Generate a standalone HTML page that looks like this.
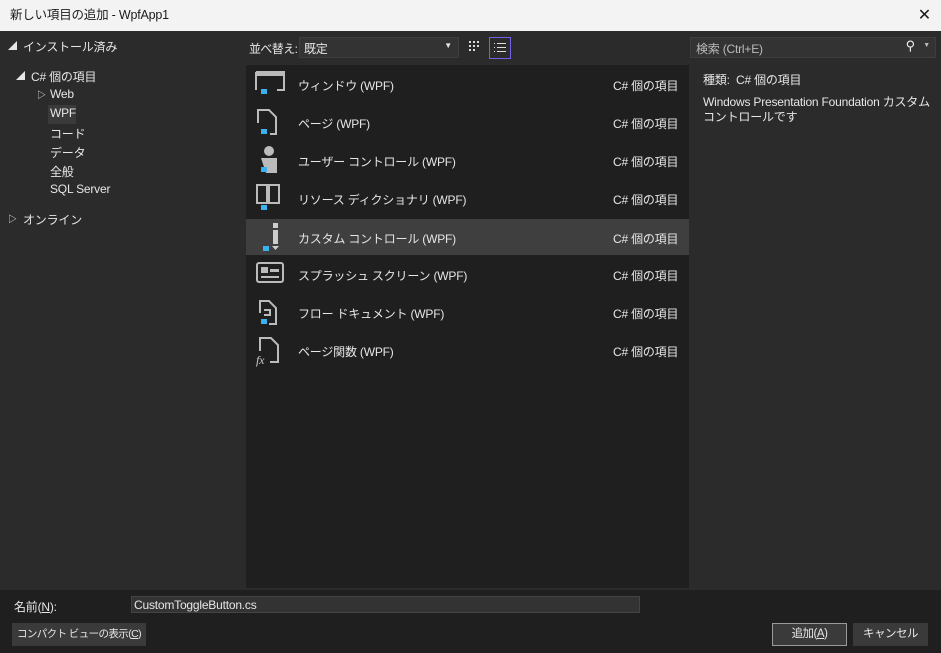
<!DOCTYPE html>
<html><head><meta charset="utf-8"><style>
*{box-sizing:border-box;margin:0;padding:0}
html,body{width:941px;height:653px;overflow:hidden}
body{background:#2b2b2b;font-family:"Liberation Sans","Noto Sans CJK JP",sans-serif;font-size:12px;color:#e6e6e6;position:relative;letter-spacing:-0.2px}
.abs{position:absolute;white-space:nowrap}
.title{left:0;top:0;width:941px;height:31px;background:#f3f3f3;color:#1a1a1a;font-size:12.5px;line-height:31px;padding-left:10px}
.tree div{position:absolute;white-space:nowrap}
.list{left:246px;top:65px;width:443px;height:523px;background:#1f1f1f}
.row{position:absolute;left:0;width:443px;height:36px}
.row .t{position:absolute;left:52px;top:11px;white-space:nowrap}
.row .c{position:absolute;left:367px;top:11px;white-space:nowrap}
.row svg{position:absolute;left:8px;top:3px}
.sel{background:#3f3f3f}
.bottom{left:0;top:590px;width:941px;height:63px;background:#1f1f1f}
.btn{position:absolute;background:#3a3a3a;text-align:center;line-height:23px;height:23px;white-space:nowrap;font-size:11.5px;letter-spacing:-0.5px}
</style></head><body>
<div class="abs title">新しい項目の追加 - WpfApp1<span style="position:absolute;right:10px;top:0;font-size:16px">✕</span></div>

<div class="tree">
<div style="left:8px;top:39px;font-size:9px">◢</div><div style="left:23px;top:38px">インストール済み</div>
<div style="left:16px;top:69px;font-size:9px">◢</div><div style="left:31px;top:68px">C# 個の項目</div>
<div style="left:37px;top:88px;font-size:9px">▷</div><div style="left:50px;top:87px">Web</div>
<div style="left:48px;top:105px;width:28px;height:19px;background:#3a3a3a"></div><div style="left:50px;top:106px">WPF</div>
<div style="left:50px;top:125px">コード</div>
<div style="left:50px;top:144px">データ</div>
<div style="left:50px;top:163px">全般</div>
<div style="left:50px;top:182px">SQL Server</div>
<div style="left:8px;top:212px;font-size:9px">▷</div><div style="left:23px;top:211px">オンライン</div>
</div>

<div class="abs" style="left:249px;top:40px;letter-spacing:-0.6px">並べ替え:</div>
<div class="abs" style="left:299px;top:37px;width:160px;height:21px;background:#333;border:1px solid #3d3d3d;padding:2px 4px">既定<span style="position:absolute;right:6px;top:3px;font-size:8px">▼</span></div>
<svg class="abs" style="left:468px;top:40px" width="14" height="14"><g fill="#ddd"><rect x="1" y="1" width="2" height="2"/><rect x="5" y="1" width="2" height="2"/><rect x="9" y="1" width="2" height="2"/><rect x="1" y="5" width="2" height="2"/><rect x="5" y="5" width="2" height="2"/><rect x="9" y="5" width="2" height="2"/><rect x="1" y="9" width="2" height="2"/><rect x="5" y="9" width="2" height="2"/></g></svg>
<div class="abs" style="left:489px;top:37px;width:22px;height:22px;border:1px solid #7160e8"></div>
<svg class="abs" style="left:493px;top:42px" width="14" height="12"><g fill="#ddd"><rect x="1" y="1" width="1" height="1"/><rect x="4" y="1" width="9" height="1"/><rect x="1" y="5" width="1" height="1"/><rect x="4" y="5" width="9" height="1"/><rect x="1" y="9" width="1" height="1"/><rect x="4" y="9" width="9" height="1"/></g></svg>

<div class="abs" style="left:690px;top:37px;width:246px;height:21px;background:#333;border:1px solid #3d3d3d;padding:2px 5px;color:#bbb">検索 (Ctrl+E)<span style="position:absolute;right:20px;top:0;color:#eee;font-size:13px">⚲</span><span style="position:absolute;right:5px;top:4px;font-size:7px">▼</span></div>

<div class="abs list">
<div class="row" style="top:1px"><svg width="34" height="32"><path d="M2 3h28v18h-7M2 3v18" stroke="#bbb" stroke-width="2" fill="none"/><rect x="2" y="3" width="28" height="4" fill="#bbb"/><rect x="7" y="20" width="6" height="5" fill="#3cb0f0"/></svg><span class="t">ウィンドウ (WPF)</span><span class="c">C# 個の項目</span></div>
<div class="row" style="top:39px"><svg width="34" height="32"><path d="M4 16V3h11l7 7v17h-6" stroke="#bbb" stroke-width="2" fill="none"/><rect x="7" y="22" width="6" height="5" fill="#3cb0f0"/></svg><span class="t">ページ (WPF)</span><span class="c">C# 個の項目</span></div>
<div class="row" style="top:77px"><svg width="34" height="32"><circle cx="15" cy="6" r="5" fill="#bbb"/><path d="M7 13h16v15H12z" fill="#bbb"/><rect x="7" y="22" width="6" height="5" fill="#3cb0f0"/></svg><span class="t">ユーザー コントロール (WPF)</span><span class="c">C# 個の項目</span></div>
<div class="row" style="top:115px"><svg width="34" height="32"><path d="M3 2h10v18H3zM15 2h10v18H15z" stroke="#bbb" stroke-width="2" fill="none"/><rect x="7" y="22" width="6" height="5" fill="#3cb0f0"/></svg><span class="t">リソース ディクショナリ (WPF)</span><span class="c">C# 個の項目</span></div>
<div class="row sel" style="top:154px;height:36px"><svg width="34" height="32"><rect x="19" y="1" width="5" height="5" fill="#ccc"/><rect x="19" y="8" width="5" height="14" fill="#ccc"/><path d="M18 24h7l-3.5 4z" fill="#ccc"/><rect x="9" y="24" width="6" height="5" fill="#3cb0f0"/></svg><span class="t">カスタム コントロール (WPF)</span><span class="c">C# 個の項目</span></div>
<div class="row" style="top:191px"><svg width="34" height="32"><rect x="3" y="4" width="26" height="19" rx="2" stroke="#bbb" stroke-width="2" fill="none"/><rect x="7" y="8" width="7" height="6" fill="#bbb"/><rect x="16" y="10" width="9" height="3" fill="#bbb"/><rect x="7" y="17" width="18" height="2" fill="#bbb"/></svg><span class="t">スプラッシュ スクリーン (WPF)</span><span class="c">C# 個の項目</span></div>
<div class="row" style="top:229px"><svg width="34" height="32"><path d="M6 16V4h9l7 7v16h-7" stroke="#bbb" stroke-width="2" fill="none"/><path d="M10 13h6v5h-6" stroke="#bbb" stroke-width="2" fill="none"/><rect x="7" y="22" width="6" height="5" fill="#3cb0f0"/></svg><span class="t">フロー ドキュメント (WPF)</span><span class="c">C# 個の項目</span></div>
<div class="row" style="top:267px"><svg width="34" height="32"><path d="M6 16V3h11l7 7v17h-8" stroke="#bbb" stroke-width="2" fill="none"/><text x="2" y="29" font-size="12" font-style="italic" font-family="Liberation Serif" fill="#ccc">fx</text></svg><span class="t">ページ関数 (WPF)</span><span class="c">C# 個の項目</span></div>
</div>

<div class="abs" style="left:703px;top:71px">種類:&nbsp; C# 個の項目</div>
<div class="abs" style="left:703px;top:95px;line-height:15px">Windows Presentation Foundation カスタム<br>コントロールです</div>

<div class="abs bottom">
<div class="abs" style="left:14px;top:8px">名前(<u>N</u>):</div>
<div class="abs" style="left:131px;top:6px;width:509px;height:17px;background:#333;border:1px solid #444;padding:1px 2px;line-height:14px">CustomToggleButton.cs</div>
<div class="btn" style="left:12px;top:33px;width:134px;font-size:10.5px;letter-spacing:-0.6px">コンパクト ビューの表示(<u>C</u>)</div>
<div class="btn" style="left:772px;top:33px;width:75px;border:1px solid #999;line-height:21px">追加(<u>A</u>)</div>
<div class="btn" style="left:853px;top:33px;width:75px">キャンセル</div>
</div>
</body></html>
